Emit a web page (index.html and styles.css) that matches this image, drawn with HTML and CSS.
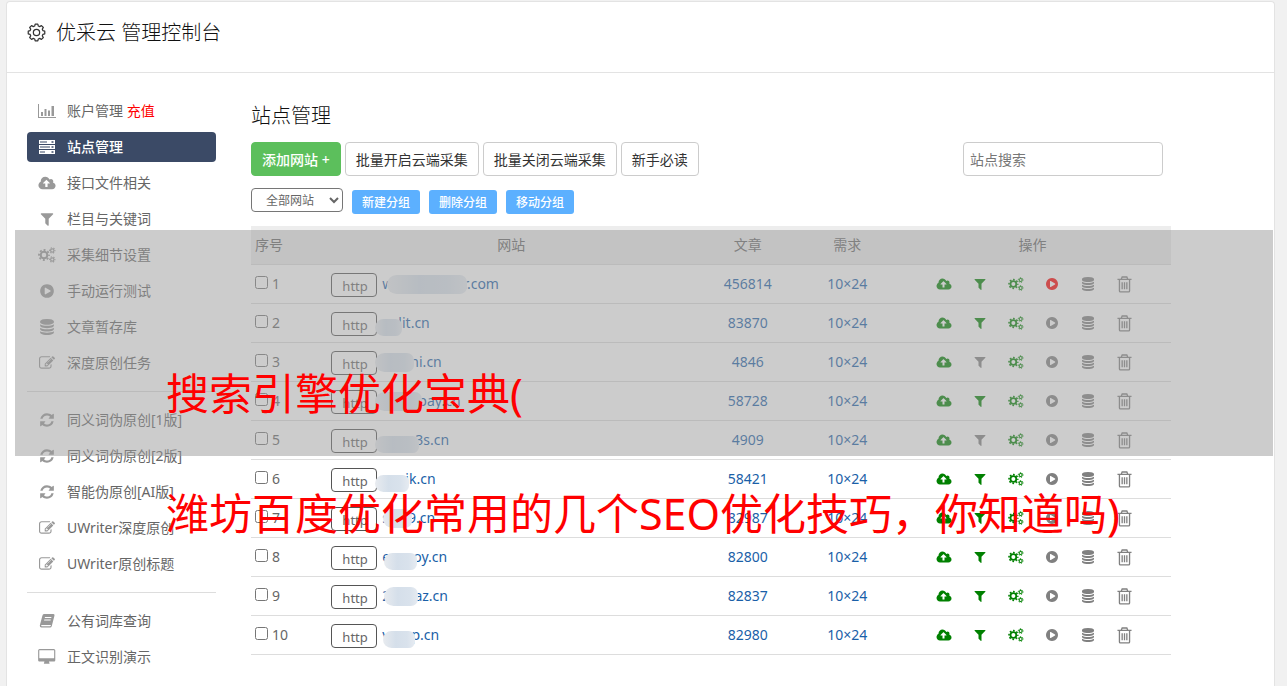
FILE: index.html
```html
<!DOCTYPE html>
<html lang="zh-CN">
<head>
  <meta charset="UTF-8" />
  <meta name="viewport" content="width=device-width, initial-scale=1.0" />
  <title>优采云 管理控制台</title>
  <link rel="stylesheet" href="styles.css">
</head>
<body>

  <svg class="sprite" aria-hidden="true">
    <symbol id="i-gear" viewBox="0 0 20 20">
      <path fill="none" stroke="currentColor" stroke-width="1.3" stroke-linejoin="round" d="M8.6 1.2h2.8l.5 2 1.5.6 1.8-1.1 2 2-1.1 1.8.6 1.5 2 .6v2.8l-2 .6-.6 1.5 1.1 1.8-2 2-1.8-1.1-1.5.6-.5 2H8.600l-.5-2-1.500-.6-1.800 1.100-2-2 1.100-1.800-.6-1.500-2-.6V8.600l2-.6.6-1.500-1.100-1.800 2-2 1.800 1.100 1.500-.6z"/>
      <circle cx="10" cy="10" r="3.300" fill="none" stroke="currentColor" stroke-width="1.300"/>
    </symbol>
    <symbol id="i-chart" viewBox="0 0 18 14">
      <path fill="currentColor" d="M0 0h1v13h17v1H0zM3 8h2v4H3zM6.500 5h2v7h-2zM10 6.500h2V12h-2zM13.500 2h2.500v10h-2.500z"/>
    </symbol>
    <symbol id="i-server" viewBox="0 0 18 14">
      <path fill="currentColor" fill-rule="evenodd" d="M1 0h16v4H1zM13.500 1.300v1.400h2V1.300zM2 1.500v1h7v-1zM1 5h16v4H1zM13.500 6.300v1.400h2V6.300zM2 6.500v1h10v-1zM1 10h16v4H1zM13.500 11.300v1.400h2v-1.400zM2 11.500v1h5v-1z"/>
    </symbol>
    <symbol id="i-cloud" viewBox="0 0 1920 1792">
      <path fill="currentColor" d="M1280 928q0-14-9-23l-352-352q-9-9-23-9t-23 9l-351 351q-10 12-10 24 0 14 9 23t23 9h224v352q0 13 9.500 22.500t22.500 9.500h192q13 0 22.500-9.500t9.500-22.500v-352h224q13 0 22.500-9.500t9.500-22.500zm640 288q0 159-112.500 271.500t-271.500 112.500h-1088q-185 0-316.500-131.500t-131.500-316.500q0-130 70-240t188-165q-2-30-2-43 0-212 150-362t362-150q156 0 285.500 87t188.500 231q71-62 166-62 106 0 181 75t75 181q0 76-41 138 130 31 213.500 135.500t83.500 238.500z"/>
    </symbol>
    <symbol id="i-filter" viewBox="0 0 1792 1792">
      <path fill="currentColor" d="M1595 295q17 41-14 70l-493 493v742q0 42-39 59-13 5-25 5-27 0-45-19l-256-256q-19-19-19-45v-486l-493-493q-31-29-14-70 17-39 59-39h1280q42 0 59 39z"/>
    </symbol>
    <symbol id="i-gears" viewBox="0 0 18 16">
      <g fill="none" stroke="currentColor">
        <circle cx="6" cy="8" r="3.300" stroke-width="2"/>
        <circle cx="6" cy="8" r="5" stroke-width="1.800" stroke-dasharray="1.960 1.967" stroke-dashoffset="1"/>
        <circle cx="14.300" cy="3.500" r="1.700" stroke-width="1.200"/>
        <circle cx="14.300" cy="3.500" r="2.700" stroke-width="1.100" stroke-dasharray="1.400 1.427" stroke-dashoffset=".7"/>
        <circle cx="14.300" cy="12.500" r="1.700" stroke-width="1.200"/>
        <circle cx="14.300" cy="12.500" r="2.700" stroke-width="1.100" stroke-dasharray="1.400 1.427" stroke-dashoffset=".7"/>
      </g>
    </symbol>
    <symbol id="i-play" viewBox="0 0 1792 1792">
      <path fill="currentColor" d="M896 128q209 0 385.500 103t279.500 279.500 103 385.500-103 385.500-279.500 279.500-385.500 103-385.500-103-279.500-279.500-103-385.500 103-385.500 279.500-279.500 385.500-103zm384 823q32-18 32-55t-32-55l-544-320q-31-19-64-1-32 19-32 56v640q0 37 32 56 16 8 32 8 17 0 32-9z"/>
    </symbol>
    <symbol id="i-database" viewBox="0 0 1792 1792">
      <path fill="currentColor" d="M896 768q237 0 443-43t325-127v170q0 69-103 128t-280 93.500-385 34.500-385-34.500-280-93.500-103-128v-170q119 84 325 127t443 43zm0 768q237 0 443-43t325-127v170q0 69-103 128t-280 93.500-385 34.500-385-34.500-280-93.500-103-128v-170q119 84 325 127t443 43zm0-384q237 0 443-43t325-127v170q0 69-103 128t-280 93.500-385 34.500-385-34.500-280-93.500-103-128v-170q119 84 325 127t443 43zm0-1152q208 0 385 34.500t280 93.500 103 128v128q0 69-103 128t-280 93.500-385 34.500-385-34.500-280-93.500-103-128v-128q0-69 103-128t280-93.500 385-34.500z"/>
    </symbol>
    <symbol id="i-edit" viewBox="0 0 1792 1792">
      <path fill="currentColor" d="M888 1184l116-116-152-152-116 116v56h96v96h56zm440-720q-16-16-33 1l-350 350q-17 17-1 33t33-1l350-350q17-17 1-33zm80 594v190q0 119-84.500 203.500t-203.500 84.500h-832q-119 0-203.500-84.500t-84.500-203.500v-832q0-119 84.500-203.500t203.500-84.500h832q63 0 117 25 15 7 18 23 3 17-9 29l-49 49q-14 14-32 8-23-6-45-6h-832q-66 0-113 47t-47 113v832q0 66 47 113t113 47h832q66 0 113-47t47-113v-126q0-13 9-22l64-64q15-15 35-7t20 29zm-96-738l288 288-672 672h-288v-288zm444 132l-92 92-288-288 92-92q28-28 68-28t68 28l152 152q28 28 28 68t-28 68z"/>
    </symbol>
    <symbol id="i-refresh" viewBox="0 0 1792 1792">
      <path fill="currentColor" d="M1639 1056q0 5-1 7-64 268-268 434.500t-478 166.500q-146 0-282.500-55t-243.500-157l-129 129q-19 19-45 19t-45-19-19-45v-448q0-26 19-45t45-19h448q26 0 45 19t19 45-19 45l-137 137q71 66 161 102t187 36q134 0 250-65t186-179q11-17 53-117 8-23 30-23h192q13 0 22.500 9.500t9.500 22.500zm25-800v448q0 26-19 45t-45 19h-448q-26 0-45-19t-19-45 19-45l138-138q-148-137-349-137-134 0-250 65t-186 179q-11 17-53 117-8 23-30 23h-199q-13 0-22.500-9.500t-9.500-22.500v-7q65-268 270-434.500t480-166.500q146 0 284 55.500t245 156.500l130-129q19-19 45-19t45 19 19 45z"/>
    </symbol>
    <symbol id="i-book" viewBox="0 0 16 16">
      <path fill="currentColor" fill-rule="evenodd" d="M5 1h9.500q1.300.2 1 1.500L12.800 13q-.4 1.500-1.800 1.500H2.500Q.6 14.300.8 12.500L3.300 3Q3.700 1.200 5 1zM6 4l-.3 1h6.500l.3-1zM5.300 6.500l-.3 1h6.500l.3-1zM2.300 12q-.3 1.200.5 1.200H11q.6 0 .8-.6l.2-.6z"/>
    </symbol>
    <symbol id="i-desktop" viewBox="0 0 1856 1792">
      <path fill="currentColor" d="M1728 992v-832q0-13-9.500-22.500t-22.500-9.500h-1600q-13 0-22.500 9.500t-9.500 22.500v832q0 13 9.500 22.500t22.500 9.500h1600q13 0 22.500-9.500t9.500-22.500zm128-832v1088q0 66-47 113t-113 47h-544q0 37 16 77.500t32 71 16 43.500q0 26-19 45t-45 19h-512q-26 0-45-19t-19-45q0-14 16-44t32-70 16-78h-544q-66 0-113-47t-47-113v-1088q0-66 47-113t113-47h1600q66 0 113 47t47 113z"/>
    </symbol>
    <symbol id="i-trash" viewBox="0 0 16 18">
      <path fill="none" stroke="currentColor" stroke-width="1.400" d="M.5 3.600h15M4.500 3.400L5.500 1h5l1 2.400M2.600 3.600v12.200q0 1 1 1h8.800q1 0 1-1V3.600M5.500 6.500v7.500M8 6.500v7.500M10.500 6.500v7.500"/>
    </symbol>
  </svg>

  <div class="panel">
    <header class="panel-head">
      <svg class="logo"><use href="#i-gear"/></svg>
      <h1>优采云 管理控制台</h1>
    </header>

    <div class="panel-body">
      <nav class="side">
        <a href="#"><svg><use href="#i-chart"/></svg>账户管理&nbsp;<em>充值</em></a>
        <a href="#" class="active"><svg><use href="#i-server"/></svg>站点管理</a>
        <a href="#"><svg><use href="#i-cloud"/></svg>接口文件相关</a>
        <a href="#"><svg><use href="#i-filter"/></svg>栏目与关键词</a>
        <a href="#"><svg><use href="#i-gears"/></svg>采集细节设置</a>
        <a href="#"><svg><use href="#i-play"/></svg>手动运行测试</a>
        <a href="#"><svg><use href="#i-database"/></svg>文章暂存库</a>
        <a href="#"><svg><use href="#i-edit"/></svg>深度原创任务</a>
        <hr>
        <a href="#"><svg><use href="#i-refresh"/></svg>同义词伪原创[1版]</a>
        <a href="#"><svg><use href="#i-refresh"/></svg>同义词伪原创[2版]</a>
        <a href="#"><svg><use href="#i-refresh"/></svg>智能伪原创[AI版]</a>
        <a href="#"><svg><use href="#i-edit"/></svg>UWriter深度原创</a>
        <a href="#"><svg><use href="#i-edit"/></svg>UWriter原创标题</a>
        <hr>
        <a href="#"><svg><use href="#i-book"/></svg>公有词库查询</a>
        <a href="#"><svg><use href="#i-desktop"/></svg>正文识别演示</a>
      </nav>

      <main class="main">
        <h2>站点管理</h2>

        <div class="toolbar">
          <button class="btn btn-add">添加网站 +</button>
          <button class="btn">批量开启云端采集</button>
          <button class="btn">批量关闭云端采集</button>
          <button class="btn">新手必读</button>
          <input class="search" type="text" placeholder="站点搜索" aria-label="站点搜索">
        </div>

        <div class="groups">
          <select class="group-select" aria-label="分组">
            <option>全部网站</option>
          </select>
          <button class="btn-group">新建分组</button>
          <button class="btn-group">删除分组</button>
          <button class="btn-group">移动分组</button>
        </div>

        <table class="sites">
          <thead>
            <tr>
              <th class="c-no">序号</th>
              <th class="c-site">网站</th>
              <th class="c-count">文章</th>
              <th class="c-need">需求</th>
              <th class="c-ops">操作</th>
            </tr>
          </thead>
          <tbody id="rows"></tbody>
        </table>
      </main>
    </div>
  </div>

  <div class="shade"></div>
  <div class="caption">
    <p>搜索引擎优化宝典(</p>
    <p>潍坊百度优化常用的几个SEO优化技巧，你知道吗)</p>
  </div>

  <script>
    // start / end: visible parts of the domain, smudge: width of the hidden part
    const sites = [
      { start: "w", end: "r.com", smudge: 80, count: 456814, filter: true, running: true },
      { start: "", end: "lit.cn", smudge: 27, low: true, count: 83870, filter: true },
      { start: "", end: "ni.cn", smudge: 39, count: 4846, filter: false },
      { start: "", end: "pay.cn", smudge: 47, count: 58728, filter: true },
      { start: "", end: "3s.cn", smudge: 44, low: true, count: 4909, filter: false },
      { start: "", end: "ik.cn", smudge: 34, low: true, count: 58421, filter: true },
      { start: "s", end: "9.cn", smudge: 29, count: 82987, filter: true },
      { start: "e", end: "oy.cn", smudge: 33, low: true, count: 82800, filter: true },
      { start: "2", end: "az.cn", smudge: 34, count: 82837, filter: true },
      { start: "v", end: "p.cn", smudge: 32, low: true, count: 82980, filter: true }
    ];

    function op(icon, color, title) {
      return `<a href="#" class="op ${color}" title="${title}"><svg class="${icon}"><use href="#i-${icon}"/></svg></a>`;
    }

    document.getElementById("rows").innerHTML = sites.map((s, i) => `
      <tr>
        <td><label class="pick"><input type="checkbox">${i + 1}</label></td>
        <td>
          <div class="site">
            <select class="scheme" aria-label="协议"><option>http</option></select>
            <a href="#" class="domain${s.start ? "" : " covered"}">${s.start}<span class="smudge${s.low ? " low" : ""}" style="width:${s.smudge}px"></span>${s.end}</a>
          </div>
        </td>
        <td class="num">${s.count}</td>
        <td class="num">10×24</td>
        <td>
          <div class="ops">
            ${op("cloud", "green", "接口")}
            ${op("filter", s.filter ? "green" : "grey", "栏目")}
            ${op("gears", "green", "设置")}
            ${op("play", s.running ? "red" : "grey", "运行")}
            ${op("database", "grey", "暂存库")}
            ${op("trash", "grey", "删除")}
          </div>
        </td>
      </tr>`).join("");
  </script>
</body>
</html>
```
FILE: styles.css
```css
* {
  box-sizing: border-box;
}

body {
  margin: 0;
  padding: 1px 12px 0 6px;
  min-height: 100vh;
  display: flex;
  position: relative;
  background: #f1f1f1;
  color: #666;
  font-family: "Noto Sans", "Noto Sans CJK SC", sans-serif;
  font-size: 14px;
  line-height: 20px;
}

button,
input,
select {
  font-family: inherit;
  color: inherit;
}

a {
  text-decoration: none;
}

.sprite {
  display: none;
}

.panel {
  flex: 1;
  background: #fff;
  border: 1px solid #e3e3e3;
  border-bottom: 0;
  border-radius: 4px 4px 0 0;
}

.panel-head {
  display: flex;
  align-items: center;
  gap: 10px;
  height: 71px;
  padding: 0 20px 9px;
  border-bottom: 1px solid #e3e3e3;
  color: #333;
}

.logo {
  width: 19px;
  height: 19px;
}

h1,
h2 {
  margin: 0;
  font-size: 20px;
  line-height: 28px;
  font-weight: 300;
  color: #111;
}

.panel-body {
  display: flex;
  gap: 35px;
  padding: 23px 103px 0 20px;
}

/* sidebar */
.side {
  flex: 0 0 189px;
  display: flex;
  flex-direction: column;
  gap: 6px;
}

.side a {
  display: flex;
  align-items: center;
  height: 30px;
  padding-left: 11px;
  border-radius: 4px;
  color: #666;
}

.side svg {
  width: 18px;
  height: 16px;
  margin-right: 11px;
  color: #999;
}

.side em {
  font-style: normal;
  color: #f00;
}

.side .active {
  background: #3b4a66;
  color: #fff;
  font-weight: 500;
}

.side .active svg {
  color: #fff;
}

.side hr {
  width: 100%;
  margin: 7px 0;
  border: 0;
  border-top: 1px solid #ddd;
}

/* content */
.main {
  flex: 1;
  padding-top: 6px;
}

.toolbar {
  display: flex;
  gap: 4px;
  margin-top: 12px;
  padding-right: 8px;
}

.btn {
  height: 34px;
  padding: 0 10px;
  background: #fff;
  border: 1px solid #ccc;
  border-radius: 4px;
  color: #333;
  font-size: 14px;
}

.btn-add {
  background: #5cbf5c;
  border-color: #5cbf5c;
  color: #fff;
  font-weight: 500;
}

.search {
  width: 200px;
  height: 34px;
  margin-left: auto;
  padding: 0 6px;
  border: 1px solid #ccc;
  border-radius: 4px;
  font-size: 14px;
}

.search::placeholder {
  color: #777;
}

.groups {
  display: flex;
  align-items: flex-end;
  gap: 9px;
  margin: 12px 0;
}

.group-select {
  width: 92px;
  height: 24px;
  margin-bottom: 2px;
  padding: 0 0 0 10px;
  background: #fff;
  border: 1px solid #767676;
  border-radius: 4px;
  font-size: 12px;
}

.btn-group {
  height: 24px;
  padding: 0 10px;
  background: #5cb0ff;
  border: 0;
  border-radius: 3px;
  color: #fff;
  font-size: 12px;
  font-weight: 500;
}

.sites {
  width: 100%;
  table-layout: fixed;
  border-collapse: separate;
  border-spacing: 0;
}

.sites th,
.sites td {
  height: 39px;
  padding: 0 4px;
  border-bottom: 1px solid #ddd;
}

.sites th {
  background: #ededed;
  font-weight: 400;
}

.sites .c-no {
  width: 8.3%;
  text-align: left;
}

.c-site {
  width: 40%;
}

.c-count {
  width: 11.4%;
}

.c-need {
  width: 10.2%;
}

.pick {
  display: flex;
  align-items: center;
  gap: 4px;
}

.pick input {
  width: 13px;
  height: 13px;
  margin: 0 0 4px;
}

.site {
  display: flex;
  align-items: center;
  gap: 5px;
}

.scheme {
  appearance: none;
  width: 46px;
  height: 24px;
  margin-top: 2px;
  padding: 2px 0 0 10px;
  background: #fff;
  border: 1px solid #555;
  border-radius: 4px;
  font-size: 13px;
}

.domain {
  display: flex;
  align-items: center;
  color: #1a5fa8;
}

.covered {
  margin-left: -7px;
}

/* painted above the letters next to it */
.smudge {
  position: relative;
  height: 19px;
  margin: 0 -4px 0 -6px;
  border-radius: 12px 9px 9px 12px;
  background: linear-gradient(90deg, #e8ebef, #d5dfea 40%, #d9e2ec 75%, #e6ebf1);
}

.covered .smudge {
  margin-left: 0;
}

.low {
  height: 17px;
  margin-top: 8px;
}

.num {
  text-align: center;
  color: #1a5fa8;
}

.ops {
  display: flex;
  justify-content: center;
  padding-left: 3px;
}

.op {
  display: flex;
  align-items: center;
  justify-content: center;
  width: 36px;
  height: 20px;
}

.op svg {
  width: 14px;
  height: 14px;
}

.op .cloud,
.op .gears {
  width: 16px;
}

.op .trash {
  width: 15px;
  height: 17px;
}

.green {
  color: #008000;
}

.grey {
  color: #808080;
}

.red {
  color: #f00;
}

/* banner laid over the page */
.shade {
  position: absolute;
  top: 230px;
  left: 15px;
  right: 14px;
  height: 226px;
  background: rgba(153, 153, 153, 0.5);
}

.caption {
  position: absolute;
  top: 364px;
  left: 166px;
  color: #f00;
  font-size: 43px;
  line-height: 60px;
  white-space: nowrap;
}

.caption p {
  margin: 0 0 60px;
}

.caption p:last-child {
  margin: 0;
}
```
